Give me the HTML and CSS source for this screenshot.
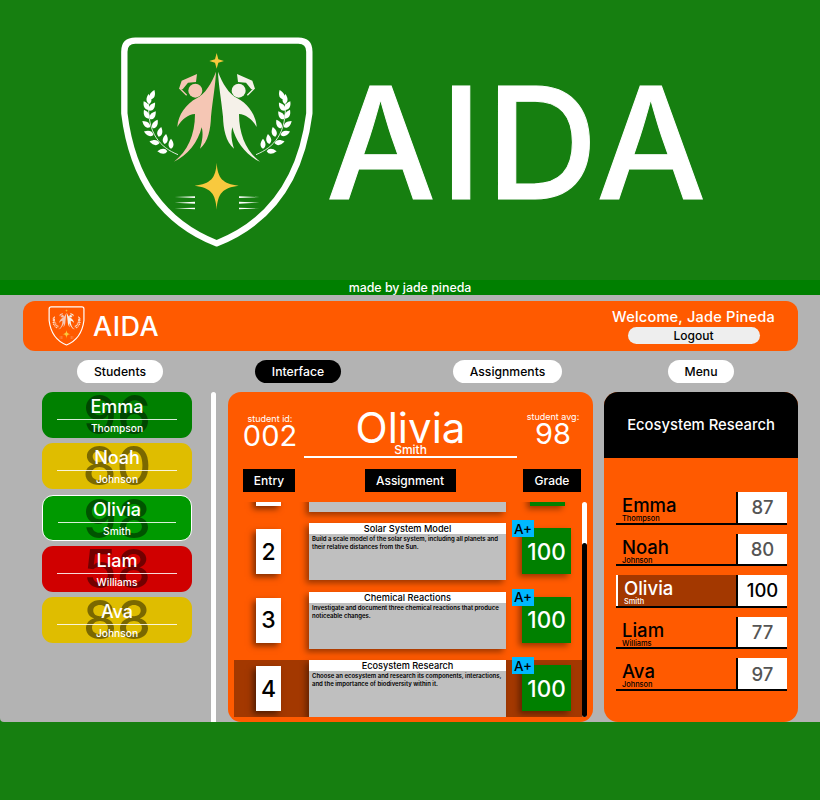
FILE: index.html
```html
<!DOCTYPE html>
<html lang="en">
<head>
<meta charset="utf-8">
<title>AIDA</title>
<link rel="stylesheet" href="styles.css">
</head>
<body>
<header class="hero">
  <svg class="hero-logo" viewBox="0 0 720 720" aria-hidden="true">
    <defs>
      <path id="leaf" d="M0 0C-10-6-10-17 0-30C10-17 10-6 0 0Z" fill="#fff"/>
      <g id="person">
        <path d="M348 155C347 190 338 240 333 290C332 325 325 365 300 386C308 360 310 340 305 322C295 365 262 408 222 425C262 395 285 345 285 282C265 283 245 298 232 321C234 285 258 252 290 235C315 222 335 190 348 155Z"/>
        <circle cx="286" cy="212" r="21"/>
        <path d="M237 206L245 182L291 162L288 186L264 188L248 208Z"/>
      </g>
      <g id="wreath" fill="none">
        <path d="M234 404C180 382 142 340 146 250" stroke="#fff" stroke-width="2.5"/>
        <use href="#leaf" transform="translate(148 252) rotate(-5)"/>
        <use href="#leaf" transform="translate(152 238) rotate(22)"/>
        <use href="#leaf" transform="translate(146 270) rotate(-30)"/>
        <use href="#leaf" transform="translate(148 272) rotate(35)"/>
        <use href="#leaf" transform="translate(146 296) rotate(-28)"/>
        <use href="#leaf" transform="translate(150 298) rotate(35)"/>
        <use href="#leaf" transform="translate(150 322) rotate(-50)"/>
        <use href="#leaf" transform="translate(158 325) rotate(30)"/>
        <use href="#leaf" transform="translate(160 345) rotate(-70)"/>
        <use href="#leaf" transform="translate(176 350) rotate(15)"/>
        <use href="#leaf" transform="translate(178 370) rotate(-80)"/>
        <use href="#leaf" transform="translate(194 372) rotate(8)"/>
        <use href="#leaf" transform="translate(202 394) rotate(-90)"/>
        <use href="#leaf" transform="translate(213 386) rotate(0)"/>
      </g>
      <g id="speed" fill="#fff">
        <path d="M224 531L285 529V534Z"/>
        <path d="M224 548L285 545V551Z"/>
        <path d="M224 565L285 563V568Z"/>
      </g>
      <g id="logo">
        <path d="M350 670C210 615 100 500 73 280V95Q73 62 106 62H595Q628 62 628 95V280C600 500 490 615 350 670Z" fill="none" stroke="#fff" stroke-width="19" stroke-linejoin="round"/>
        <path d="M350 99L355 118L372 123L355 128L350 146L345 128L328 123L345 118Z" fill="#f8c93e"/>
        <path d="M350 428C353 475 368 491 416 497C368 503 353 520 350 569C347 520 332 503 284 497C332 491 347 475 350 428Z" fill="#f8c93e"/>
        <use href="#person" fill="#f5c6b4"/>
        <path d="M239 205L260 226" stroke="#f5c6b4" stroke-width="4"/>
        <use href="#person" transform="matrix(-1 0 0 1 702 0)" fill="#f5f1e9"/>
        <path d="M463 205L442 226" stroke="#f5f1e9" stroke-width="4"/>
        <use href="#wreath"/>
        <use href="#wreath" transform="matrix(-1 0 0 1 702 0)"/>
        <use href="#speed"/>
        <use href="#speed" transform="matrix(-1 0 0 1 702 0)"/>
      </g>
    </defs>
    <use href="#logo"/>
  </svg>
  <h1 class="hero-title">AIDA</h1>
</header>

<div class="credit"><span class="credit-text">made by jade pineda</span></div>

<main class="app">
  <div class="topbar">
    <svg class="top-logo" viewBox="55 50 590 635" aria-hidden="true"><use href="#logo"/></svg>
    <span class="top-title">AIDA</span>
    <div class="user">
      <div class="welcome">Welcome, Jade Pineda</div>
      <button class="logout">Logout</button>
    </div>
  </div>

  <nav class="nav">
    <span class="pill pill-students">Students</span>
    <span class="pill pill-interface">Interface</span>
    <span class="pill pill-assign">Assignments</span>
    <span class="pill pill-menu">Menu</span>
  </nav>

  <div class="columns">
    <section class="students">
      <div class="card card-green"><span class="card-num">96</span><div class="card-first">Emma</div><div class="card-last">Thompson</div></div>
      <div class="card card-yellow"><span class="card-num">80</span><div class="card-first">Noah</div><div class="card-last">Johnson</div></div>
      <div class="card card-active"><span class="card-num">98</span><div class="card-first">Olivia</div><div class="card-last">Smith</div></div>
      <div class="card card-red"><span class="card-num">58</span><div class="card-first">Liam</div><div class="card-last">Williams</div></div>
      <div class="card card-yellow"><span class="card-num">88</span><div class="card-first">Ava</div><div class="card-last">Johnson</div></div>
    </section>

    <div class="divider"></div>

    <section class="detail">
      <div class="detail-head">
        <div class="stat stat-id"><span class="stat-label">student id:</span><span class="stat-value">002</span></div>
        <div class="who"><div class="who-first">Olivia</div><div class="who-last">Smith</div></div>
        <div class="stat"><span class="stat-label">student avg:</span><span class="stat-value">98</span></div>
      </div>
      <div class="table-head">
        <span class="th th-entry">Entry</span>
        <span class="th th-assign">Assignment</span>
        <span class="th th-grade">Grade</span>
      </div>
      <div class="table-body">
        <div class="rows">
          <div class="row row-cut">
            <div class="entry-cell"><div class="entry"></div></div>
            <div class="task"></div>
            <div class="grade-cell"><div class="grade"></div></div>
          </div>
          <div class="row">
            <div class="entry-cell"><div class="entry">2</div></div>
            <div class="task"><div class="task-title">Solar System Model</div><p class="task-text">Build a scale model of the solar system, including all planets and their relative distances from the Sun.</p></div>
            <div class="grade-cell"><span class="letter">A+</span><div class="grade">100</div></div>
          </div>
          <div class="row">
            <div class="entry-cell"><div class="entry">3</div></div>
            <div class="task"><div class="task-title">Chemical Reactions</div><p class="task-text">Investigate and document three chemical reactions that produce noticeable changes.</p></div>
            <div class="grade-cell"><span class="letter">A+</span><div class="grade">100</div></div>
          </div>
          <div class="row row-active">
            <div class="entry-cell"><div class="entry">4</div></div>
            <div class="task"><div class="task-title">Ecosystem Research</div><p class="task-text">Choose an ecosystem and research its components, interactions, and the importance of biodiversity within it.</p></div>
            <div class="grade-cell"><span class="letter">A+</span><div class="grade">100</div></div>
          </div>
        </div>
        <div class="scrollbar"><div class="thumb"></div></div>
      </div>
    </section>

    <aside class="board">
      <div class="board-head">Ecosystem Research</div>
      <div class="board-list">
        <div class="b-row"><div class="b-name"><div class="b-first">Emma</div><div class="b-last">Thompson</div></div><div class="b-score">87</div></div>
        <div class="b-row"><div class="b-name"><div class="b-first">Noah</div><div class="b-last">Johnson</div></div><div class="b-score">80</div></div>
        <div class="b-row b-active"><div class="b-name"><div class="b-first">Olivia</div><div class="b-last">Smith</div></div><div class="b-score">100</div></div>
        <div class="b-row"><div class="b-name"><div class="b-first">Liam</div><div class="b-last">Williams</div></div><div class="b-score">77</div></div>
        <div class="b-row"><div class="b-name"><div class="b-first">Ava</div><div class="b-last">Johnson</div></div><div class="b-score">97</div></div>
      </div>
    </aside>
  </div>
</main>
</body>
</html>
```

FILE: styles.css
```css
* { box-sizing: border-box; }
html, body { margin: 0; padding: 0; }
body {
  width: 820px;
  height: 800px;
  overflow: hidden;
  background: #167f10;
  font-family: "Inter", "Liberation Sans", sans-serif;
  color: #000;
}

/* Hero */
.hero {
  height: 280px;
  display: flex;
  align-items: flex-start;
  padding: 20px 0 0 100px;
}
.hero-logo { width: 240px; height: 240px; flex: none; }
.hero-title {
  margin: 29px 0 0 -14px;
  font-size: 155px;
  line-height: 188px;
  font-weight: 500;
  color: #fff;
  letter-spacing: 4px;
  -webkit-text-stroke: 1px #fff;
}

/* Credit strip */
.credit {
  height: 15px;
  background: #007f00;
  display: flex;
  justify-content: center;
  align-items: center;
}
.credit-text {
  font-size: 12.4px;
  font-weight: 500;
  color: #fff;
  line-height: 15px;
}

/* App frame */
.app {
  height: 427px;
  background: #b3b3b3;
  padding: 6px 22px 0 23px;
  border-radius: 0 0 0 4px;
}
.topbar {
  height: 50px;
  background: #ff5a00;
  border-radius: 12px;
  display: flex;
  align-items: center;
  padding: 0 23px 0 25px;
  color: #fff;
}
.top-logo { width: 37px; height: 40px; flex: none; }
.top-title { margin-left: 8px; font-size: 27px; font-weight: 500; letter-spacing: 0.5px; padding-top: 1px; }
.user { margin-left: auto; display: flex; flex-direction: column; align-items: center; }
.welcome { font-size: 14.6px; font-weight: 500; line-height: 19px; letter-spacing: 0.2px; }
.logout {
  width: 132px;
  height: 17px;
  border: 0;
  padding: 0;
  border-radius: 9px;
  background: #eeeeee;
  font: 500 12px/17px "Inter", "Liberation Sans", sans-serif;
  color: #000;
}

/* Nav */
.nav { display: flex; margin-top: 9px; }
.pill {
  height: 23px;
  border-radius: 12px;
  background: #fff;
  display: flex;
  align-items: center;
  justify-content: center;
  font-size: 12.2px;
  font-weight: 500;
}
.pill-students { width: 86px; margin-left: 54px; }
.pill-interface { width: 86px; margin-left: 92px; background: #000; color: #fff; }
.pill-assign { width: 109px; margin-left: 112px; }
.pill-menu { width: 66px; margin-left: 106px; }

/* Columns */
.columns { display: flex; margin-top: 9px; height: 330px; }
.students {
  width: 150px;
  margin-left: 19px;
  display: flex;
  flex-direction: column;
  gap: 5.3px;
}
.card {
  position: relative;
  height: 46px;
  border-radius: 11px;
  color: #fff;
  text-align: center;
  overflow: hidden;
}
.card-green { background: #008000; }
.card-yellow { background: #dfbd00; }
.card-red { background: #d00000; }
.card-active { background: #009900; border: 1px solid #fff; }
.card-num {
  position: absolute;
  inset: 0;
  font-size: 54px;
  line-height: 46px;
  font-weight: 500;
  color: rgba(0, 0, 0, 0.45);
}
.card-first {
  position: relative;
  height: 28px;
  margin: 0 15px;
  padding-top: 4px;
  font-size: 18px;
  line-height: 22px;
  font-weight: 500;
  border-bottom: 1px solid rgba(255, 255, 255, 0.85);
}
.card-last { position: relative; font-size: 10.2px; line-height: 17px; font-weight: 500; }
.card-active .card-first { height: 27px; padding-top: 3px; }

.divider {
  width: 5px;
  margin-left: 19px;
  background: #fff;
  border-radius: 3px 3px 0 0;
}

/* Detail panel */
.detail {
  width: 365px;
  margin-left: 12px;
  background: #ff5a00;
  border-radius: 13px;
  color: #fff;
  display: flex;
  flex-direction: column;
}
.detail-head {
  height: 77px;
  display: grid;
  grid-template-columns: 54px 213px 58px;
  column-gap: 7px;
  margin-left: 15px;
  padding-top: 20px;
}
.stat { display: flex; flex-direction: column; align-items: center; }
.stat-id { padding-top: 2px; }
.stat-label { font-size: 9px; line-height: 9px; white-space: nowrap; }
.stat-value { font-size: 29px; line-height: 26px; font-weight: 400; }
.who { border-bottom: 2px solid #fff; text-align: center; height: 47px; margin-top: -1px; }
.who-first { font-size: 42px; line-height: 33px; font-weight: 400; }
.who-last { font-size: 12px; line-height: 11px; font-weight: 500; }

.table-head {
  height: 23px;
  display: grid;
  grid-template-columns: 54px 212px 58px;
  column-gap: 7px;
  margin-left: 15px;
}
.th {
  background: #000;
  display: flex;
  align-items: center;
  justify-content: center;
  font-size: 12px;
  font-weight: 500;
}
.th-entry { width: 52px; }
.th-assign { width: 91px; justify-self: center; }

.table-body { display: flex; height: 215px; margin-top: 10px; }
.rows {
  width: 348px;
  margin-left: 6px;
  height: 215px;
  overflow: hidden;
  display: flex;
  flex-direction: column;
  gap: 11.5px;
  color: #000;
}
.row {
  flex: none;
  height: 57px;
  display: grid;
  grid-template-columns: 75px 197px 76px;
}
.row-cut { margin-top: -47.5px; }
.row-active { background: #a33800; }
.entry-cell { display: flex; align-items: center; justify-content: center; padding-right: 6px; }
.entry {
  width: 25px;
  height: 45px;
  background: #fff;
  display: flex;
  align-items: center;
  justify-content: center;
  font-size: 23px;
  font-weight: 500;
  box-shadow: -3px 3px 6px rgba(0, 0, 0, 0.5);
}
.task {
  background: #bfbfbf;
  box-shadow: -3px 3px 6px rgba(0, 0, 0, 0.4);
}
.task-title {
  height: 11px;
  background: #fff;
  text-align: center;
  font-size: 9.2px;
  line-height: 11px;
  font-weight: 500;
}
.task-text {
  margin: 0;
  padding: 1px 3px;
  font-size: 6px;
  line-height: 8.4px;
  font-weight: 600;
}
.grade-cell { position: relative; display: flex; align-items: center; padding-left: 16px; }
.grade {
  width: 49px;
  height: 46px;
  margin-top: -1px;
  background: #008000;
  color: #fff;
  display: flex;
  align-items: center;
  justify-content: center;
  font-size: 22.5px;
  font-weight: 500;
  box-shadow: -3px 3px 6px rgba(0, 0, 0, 0.4);
}
.row-cut .grade { width: 35px; margin-left: 8px; }
.letter {
  position: absolute;
  left: 6px;
  top: -3px;
  width: 22px;
  height: 17px;
  background: #00b8ff;
  display: flex;
  align-items: center;
  justify-content: center;
  font-size: 13.5px;
  font-weight: 500;
  color: #000;
  z-index: 1;
}
.scrollbar {
  width: 5px;
  height: 215px;
  background: #fff;
  border-radius: 3px;
  display: flex;
  flex-direction: column;
  justify-content: flex-end;
}
.thumb { height: 174px; background: #000; border-radius: 3px; }

/* Board */
.board {
  width: 194px;
  margin-left: 11px;
  background: #ff5a00;
  border-radius: 14px;
  overflow: hidden;
}
.board-head {
  height: 66px;
  background: #000;
  color: #fff;
  display: flex;
  align-items: center;
  justify-content: center;
  font-size: 14.8px;
  font-weight: 500;
}
.board-list {
  margin: 34px 11px 0 12px;
  display: flex;
  flex-direction: column;
  gap: 9px;
}
.b-row {
  height: 32.6px;
  display: flex;
  border-bottom: 2.5px solid #000;
}
.b-name { flex: 1; padding: 4px 0 0 6px; border-right: 2.5px solid #000; }
.b-first { font-size: 18.5px; line-height: 19px; font-weight: 500; }
.b-last { font-size: 7.4px; line-height: 7px; font-weight: 500; }
.b-score {
  width: 49px;
  background: #fff;
  display: flex;
  align-items: center;
  justify-content: center;
  font-size: 18.5px;
  font-weight: 500;
  color: #555;
}
.b-active .b-name {
  background: #a33800;
  color: #fff;
  border-left: 2.5px solid #fff;
  padding-left: 6px;
}
.b-active .b-score { color: #000; }
```
